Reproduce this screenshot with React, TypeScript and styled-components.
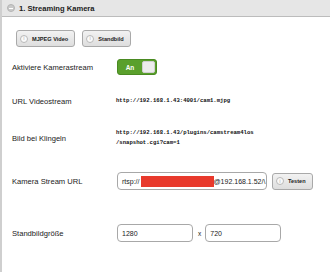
import React from "react";
import styled, { createGlobalStyle } from "styled-components";

const Global = createGlobalStyle`
  html, body { margin: 0; padding: 0; background: #fff; }
  body { font-family: "Liberation Sans", Arial, sans-serif; color: #222; }
`;

const Page = styled.div`
  position: relative;
  width: 330px;
  height: 272px;
  overflow: hidden;
  border-left: 2px solid #cfcfcf;
  box-sizing: border-box;
  background: #fff;
`;

const Header = styled.div`
  height: 16px;
  background: #e6e6e6;
  border-bottom: 1px solid #bcbcbc;
  display: flex;
  align-items: center;
  padding-left: 5px;
  gap: 4px;
`;

const HeaderIcon = styled.span`
  width: 8px;
  height: 8px;
  border-radius: 50%;
  background: #c9c9c9;
  border: 1px solid #b5b5b5;
  box-sizing: border-box;
  display: flex;
  align-items: center;
  justify-content: center;
  &::after {
    content: "";
    width: 4px;
    height: 1px;
    background: #fff;
  }
`;

const HeaderTitle = styled.span`
  font-size: 7.6px;
  font-weight: bold;
  color: #222;
`;

const Content = styled.div`
  padding-top: 13px;
`;

const ButtonBar = styled.div`
  display: flex;
  gap: 7px;
  padding-left: 14px;
  margin-bottom: 4px;
`;

const PillButton = styled.button<{ $ml?: number }>`
  height: 17px;
  padding: 0 6px 0 3px;
  margin-left: ${(p) => p.$ml ?? 0}px;
  display: flex;
  align-items: center;
  gap: 4px;
  border: 1px solid #a9a9a9;
  border-radius: 3px;
  background: linear-gradient(#f2f2f2, #dedede);
  font-family: "Liberation Sans", Arial, sans-serif;
  font-size: 5.6px;
  font-weight: bold;
  color: #222;
  box-sizing: border-box;
`;

const InfoIcon = styled.span`
  width: 8px;
  height: 8px;
  border-radius: 50%;
  border: 1px solid #b8b8b8;
  background: #fafafa;
  box-sizing: border-box;
  display: flex;
  align-items: center;
  justify-content: center;
  font-size: 5px;
  color: #c8c8c8;
  line-height: 1;
`;

const Row = styled.div<{ $h: number }>`
  display: flex;
  align-items: center;
  height: ${(p) => p.$h}px;
`;

const Label = styled.div`
  width: 115px;
  padding-left: 10px;
  box-sizing: border-box;
  font-size: 7.6px;
  color: #222;
  flex-shrink: 0;
`;

const Mono = styled.div`
  font-family: "Liberation Mono", "Courier New", monospace;
  font-size: 5.6px;
  font-weight: bold;
  line-height: 10px;
  color: #111;
  white-space: pre;
  margin-left: -1px;
`;

const Toggle = styled.div`
  width: 40px;
  height: 16px;
  border-radius: 3px;
  background: #5aa02c;
  border: 1px solid #4a8a22;
  box-sizing: border-box;
  display: flex;
  align-items: center;
  padding: 0 1px 0 0;
`;

const ToggleText = styled.span`
  flex: 1;
  text-align: center;
  color: #fff;
  font-weight: bold;
  font-size: 6.5px;
`;

const Knob = styled.span`
  width: 13px;
  height: 12px;
  border-radius: 2px;
  background: #ececec;
  border: 1px solid #cfcfcf;
  box-sizing: border-box;
`;

const Field = styled.div<{ $w: number }>`
  width: ${(p) => p.$w}px;
  height: 18px;
  border: 1px solid #a8a8a8;
  border-radius: 4px;
  box-sizing: border-box;
  display: flex;
  align-items: center;
  padding-left: 4px;
  font-size: 7px;
  color: #222;
  background: #fff;
  overflow: hidden;
  white-space: nowrap;
`;

const Redact = styled.span`
  display: inline-block;
  width: 73px;
  height: 11px;
  background: #e8392c;
  margin-left: 1px;
`;

const Cross = styled.span`
  font-size: 6.5px;
  margin: 0 4px 0 5px;
  color: #222;
`;

const Inline = styled.div`
  display: flex;
  align-items: center;
`;

export default function App() {
  return (
    <>
      <Global />
      <Page>
        <Header>
          <HeaderIcon />
          <HeaderTitle>1. Streaming Kamera</HeaderTitle>
        </Header>
        <Content>
          <ButtonBar>
            <PillButton>
              <InfoIcon>i</InfoIcon>
              MJPEG Video
            </PillButton>
            <PillButton>
              <InfoIcon>i</InfoIcon>
              Standbild
            </PillButton>
          </ButtonBar>
          <Row $h={32}>
            <Label>Aktiviere Kamerastream</Label>
            <Toggle>
              <ToggleText>An</ToggleText>
              <Knob />
            </Toggle>
          </Row>
          <Row $h={36}>
            <Label>URL Videostream</Label>
            <Mono>http://192.168.1.43:4001/cam1.mjpg</Mono>
          </Row>
          <Row $h={38}>
            <Label>Bild bei Klingeln</Label>
            <Mono>{"http://192.168.1.43/plugins/camstream4los\n/snapshot.cgi?cam=1"}</Mono>
          </Row>
          <Row $h={48}>
            <Label>Kamera Stream URL</Label>
            <Field $w={150}>
              rtsp://<Redact />@192.168.1.52/\
            </Field>
            <PillButton $ml={5}>
              <InfoIcon>i</InfoIcon>
              Testen
            </PillButton>
          </Row>
          <Row $h={56}>
            <Label>Standbildgröße</Label>
            <Inline>
              <Field $w={76}>1280</Field>
              <Cross>x</Cross>
              <Field $w={76}>720</Field>
            </Inline>
          </Row>
        </Content>
      </Page>
    </>
  );
}
